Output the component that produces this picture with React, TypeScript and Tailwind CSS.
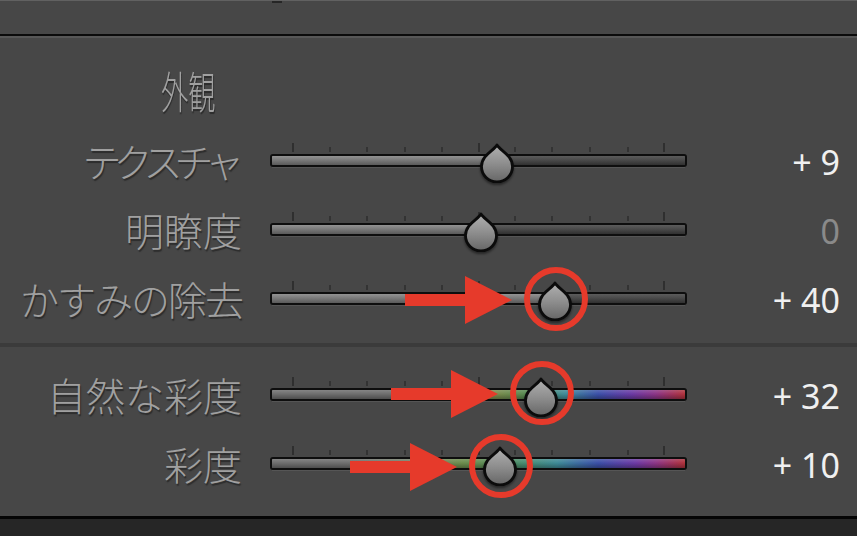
import React from 'react';

interface SliderRow {
  id: string;
  label: string;
  labelClass?: string;
  value: string;
  muted?: boolean;
  thumb: number; // thumb centre, px from track left
  color?: 'vibrance' | 'saturation';
  mark?: {
    tip: number;
    arrowY: number;
    circleX: number;
    circleY: number;
  };
}

const TICKS = [23, 60, 97, 135, 172, 209, 245, 282, 320, 358, 394];

const TOP_ROWS: SliderRow[] = [
  { id: 'texture', label: 'テクスチャ', labelClass: 'tracking-[-8px] pr-[6px]', value: '+ 9', thumb: 227 },
  { id: 'clarity', label: '明瞭度', value: '0', muted: true, thumb: 211 },
  {
    id: 'dehaze',
    label: 'かすみの除去',
    labelClass: 'tracking-[-2px]',
    value: '+ 40',
    thumb: 285,
    mark: { tip: 242, arrowY: 1.5, circleX: 286, circleY: 0.5 },
  },
];

const COLOR_ROWS: SliderRow[] = [
  {
    id: 'vibrance',
    label: '自然な彩度',
    value: '+ 32',
    thumb: 271,
    color: 'vibrance',
    mark: { tip: 228, arrowY: -1, circleX: 272, circleY: -2 },
  },
  {
    id: 'saturation',
    label: '彩度',
    value: '+ 10',
    thumb: 230,
    color: 'saturation',
    mark: { tip: 187, arrowY: 3, circleX: 231, circleY: 2.5 },
  },
];

const Thumb = ({ x }: { x: number }) => (
  <svg
    width="36"
    height="40"
    viewBox="0 0 36 40"
    className="absolute top-[-11px] drop-shadow-[0_2px_1px_rgba(0,0,0,0.45)]"
    style={{ left: x - 18 }}
  >
    <defs>
      <linearGradient id="thumbFill" x1="0" y1="0" x2="0" y2="1">
        <stop offset="0%" stopColor="#b0b0b0" />
        <stop offset="50%" stopColor="#8e8e8e" />
        <stop offset="100%" stopColor="#666666" />
      </linearGradient>
    </defs>
    <path
      d="M18 2 C21 7.5 33.5 12 33.5 23.5 A15.5 15.5 0 0 1 2.5 23.5 C2.5 12 15 7.5 18 2 Z"
      fill="url(#thumbFill)"
      stroke="#0b0b0b"
      strokeWidth="2.8"
      strokeLinejoin="round"
    />
  </svg>
);

const Arrow = ({ tip, y }: { tip: number; y: number }) => (
  <svg width="107" height="48" viewBox="0 0 107 48" className="absolute" style={{ left: tip - 107, top: 6.5 + y - 24 }}>
    <rect x="0" y="18" width="62" height="12" fill="#e63a2b" />
    <polygon points="60,0 107,24 60,48" fill="#e63a2b" />
  </svg>
);

const Track = ({ row }: { row: SliderRow }) => {
  let fill = (
    <>
      <div className="absolute inset-0 bg-[linear-gradient(to_bottom,#5c5c5c_0%,#4a4a4a_45%,#303030_100%)]" />
      <div
        className="absolute inset-y-0 left-0 bg-[linear-gradient(to_bottom,#939393_0%,#7a7a7a_45%,#5a5a5a_100%)]"
        style={{ width: row.thumb }}
      />
    </>
  );
  if (row.color === 'vibrance') {
    fill = (
      <div className="absolute inset-0 bg-[linear-gradient(to_bottom,rgba(255,255,255,0.16)_0%,rgba(0,0,0,0)_45%,rgba(0,0,0,0.3)_100%),linear-gradient(to_right,#6e6e6e_0%,#6e6e6e_28%,#72755e_42%,#7c8a4c_54%,#4f8a52_63%,#3f8a98_71%,#3b4fa8_79%,#6a3aa4_87%,#8c3585_93%,#b0323a_100%)]" />
    );
  }
  if (row.color === 'saturation') {
    fill = (
      <div className="absolute inset-0 bg-[linear-gradient(to_bottom,rgba(255,255,255,0.16)_0%,rgba(0,0,0,0)_45%,rgba(0,0,0,0.3)_100%),linear-gradient(to_right,#6e6e6e_0%,#6e6e6e_18%,#76806a_34%,#6c8c4c_46%,#4c8c62_58%,#3e8a96_69%,#3b4fa8_79%,#6c3aa4_88%,#8c3585_93%,#b0323a_100%)]" />
    );
  }

  return (
    <div className="relative w-[417px] h-[13px] ml-[28px]">
      {TICKS.map((t, i) => (
        <div
          key={t}
          className={
            i % 5 === 0
              ? 'absolute top-[-11px] h-[9px] w-[2px] bg-[#2f2f2f]'
              : 'absolute top-[-7px] h-[5px] w-[2px] bg-[#333333]'
          }
          style={{ left: t - 1 }}
        />
      ))}
      <div className="absolute inset-0 rounded-[3px] border-2 border-[#0e0e0e] overflow-hidden">{fill}</div>
      <div className="absolute left-[2px] right-[2px] top-[13px] h-px bg-[#555555]" />
      {row.mark && <Arrow tip={row.mark.tip} y={row.mark.arrowY} />}
      <Thumb x={row.thumb} />
      {row.mark && (
        <div
          className="absolute w-[64px] h-[64px] rounded-full border-[6px] border-[#e63a2b]"
          style={{ left: row.mark.circleX - 32, top: 6.5 + row.mark.circleY - 32 }}
        />
      )}
    </div>
  );
};

const Row = ({ row }: { row: SliderRow }) => (
  <div className="flex items-center h-[69px]">
    <div
      className={`w-[242px] text-right text-[39px] leading-none font-light text-[#a0a0a0] [text-shadow:1px_2px_1px_#2c2c2c] ${row.labelClass ?? ''}`}
    >
      {row.label}
    </div>
    <Track row={row} />
    <div
      className={`w-[153px] pt-[2px] text-right text-[34px] leading-none font-normal font-['Noto_Sans',sans-serif] ${
        row.muted ? 'text-[#8a8a8a]' : 'text-[#f0f0f0]'
      }`}
    >
      {row.value}
    </div>
  </div>
);

export default function App() {
  return (
    <div className="w-[857px] h-[536px] overflow-hidden bg-[#474747] flex flex-col font-['Noto_Sans_CJK_JP','Noto_Sans',sans-serif]">
      <div className="h-px bg-[#616161]" />
      <div className="h-[33px]">
        <div className="ml-[272px] w-[10px] h-[2px] bg-[#262626]" />
      </div>
      <div className="h-[2px] bg-[#0b0b0b]" />
      <div className="h-[2px] bg-[#575757]" />

      <div className="h-[88px] pt-[30px] pl-[161px]">
        <span className="inline-block origin-left scale-x-[0.62] text-[44px] leading-none font-light text-[#a0a0a0] [text-shadow:1px_2px_1px_#2c2c2c]">
          外観
        </span>
      </div>

      {TOP_ROWS.map((row) => (
        <Row key={row.id} row={row} />
      ))}

      <div className="mt-[10px] h-[4px] bg-[#3b3b3b]" />
      <div className="h-[13px]" />

      {COLOR_ROWS.map((row) => (
        <Row key={row.id} row={row} />
      ))}

      <div className="h-[18px]" />
      <div className="h-[3px] bg-[#050505]" />
      <div className="flex-1 bg-[#262626]" />
    </div>
  );
}
